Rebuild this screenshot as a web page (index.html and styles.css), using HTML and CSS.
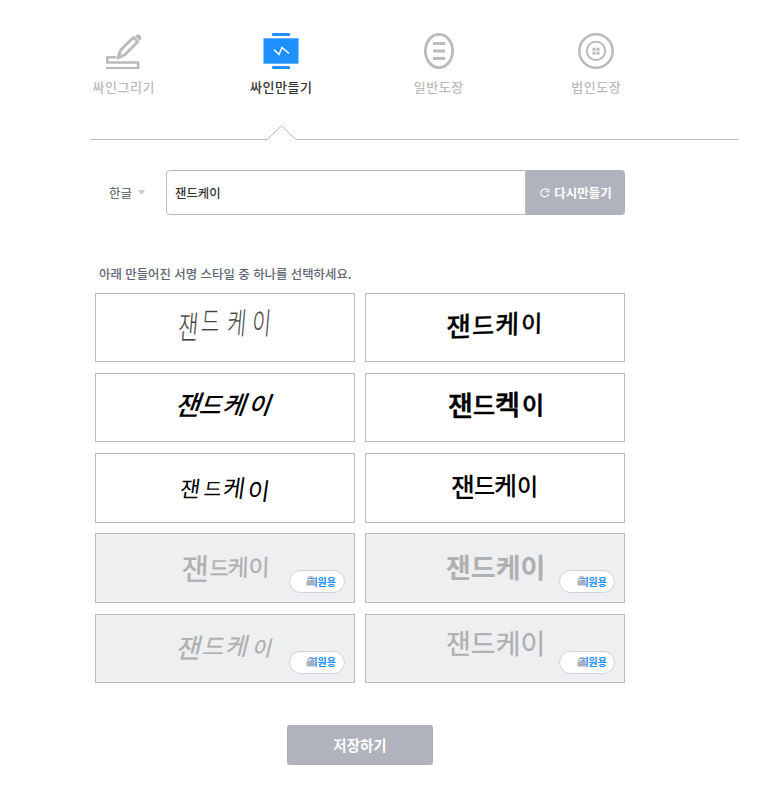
FILE: index.html
```html
<!DOCTYPE html>
<html lang="ko">
<head>
<meta charset="utf-8">
<title>싸인만들기</title>
<link rel="stylesheet" href="styles.css">
</head>
<body>
<nav class="tabs">
  <a class="tab">
    <svg width="36" height="36" viewBox="0 0 36 36" fill="none" stroke="#bbb">
      <path d="M10.200 24.300H1.200v5.200h31V35.200H0" stroke-width="2.600" stroke-linejoin="round"/>
      <path d="M12 25l2.700-8L27.400 4.500l4.300 4.300-12.800 13z" stroke-width="2.900" stroke-linejoin="round"/>
      <path d="M29 3.300L30.400 1.900q2-1.200 3.800.3t1 3.800l-1.400 1.700z" fill="#bbb" stroke="none"/>
    </svg>
    <span>싸인그리기</span>
  </a>
  <a class="tab active">
    <svg width="36" height="36" viewBox="0 0 36 36" fill="none">
      <path d="M10.300 1.500h15.400M10.300 34.500h15.400" stroke="#1e90ff" stroke-width="3" stroke-linecap="round"/>
      <rect x=".5" y="5.300" width="35" height="25.400" fill="#1e90ff"/>
      <path d="M11 16.500l5 5 3-7 7 6" stroke="#fff" stroke-width="1.500"/>
    </svg>
    <span>싸인만들기</span>
  </a>
  <a class="tab">
    <svg width="36" height="36" viewBox="0 0 36 36" fill="none" stroke="#bbb">
      <ellipse cx="18" cy="18" rx="13.600" ry="16.600" stroke-width="2.800"/>
      <path d="M12 10.500h12M12 18h12M12 25.500h12" stroke-width="3"/>
    </svg>
    <span>일반도장</span>
  </a>
  <a class="tab">
    <svg width="36" height="36" viewBox="0 0 36 36" fill="none" stroke="#bbb">
      <circle cx="18" cy="18" r="16.700" stroke-width="2.600"/>
      <circle cx="18" cy="18" r="9.200" stroke-width="2"/>
      <path d="M14.500 16.200h7M14.500 20.200h7" stroke-width="3" stroke-dasharray="3 1"/>
    </svg>
    <span>법인도장</span>
  </a>
</nav>
<svg class="divider" width="648" height="16" viewBox="0 0 648 16" fill="none" stroke="#bbb">
  <path d="M0 14.500H177.500L191.500 .700 205.500 14.500H648"/>
</svg>
<form class="maker">
  <div class="lang">한글<svg width="7" height="5" viewBox="0 0 7 5"><path d="M0 0h7L3.500 5z" fill="#c9ccd4"/></svg></div>
  <div class="name">잰드케이</div>
  <div class="remake">
    <svg width="10" height="10" viewBox="0 0 10 10" fill="none" stroke="#fff" stroke-width="1.100"><path d="M7.600 2A4 4 0 1 0 8.700 6M5.500 3.700h3.300V.500"/></svg>
    <span>다시만들기</span>
  </div>
</form>
<p class="guide">아래 만들어진 서명 스타일 중 하나를 선택하세요.</p>
<main class="cards">
  <div class="card"><svg class="sign pencil" viewBox="0 0 258 67"><text transform="translate(81 45) skewX(-5) scale(.82 1.200)"><tspan x="0" y="0" font-size="27">잰</tspan><tspan x="28" y="-6" font-size="24">드</tspan><tspan x="60" y="-4" font-size="25">케</tspan><tspan x="90" y="-4" font-size="25">이</tspan></text></svg></div>
  <div class="card"><svg class="sign marker" viewBox="0 0 258 67"><text transform="translate(80 43) rotate(-2) skewX(-3)"><tspan x="0" y="0" font-size="27">잰</tspan><tspan x="26" y="-1" font-size="24">드</tspan><tspan x="49" y="-1" font-size="26">케</tspan><tspan x="75" y="-2" font-size="23">이</tspan></text></svg></div>
  <div class="card"><svg class="sign brush" viewBox="0 0 258 67"><text transform="translate(78 41) skewX(-20)"><tspan x="0" y="0" font-size="27">잰</tspan><tspan x="24" y="-1" font-size="24">드</tspan><tspan x="47" y="-1" font-size="25">케</tspan><tspan x="73" y="-1" font-size="24">이</tspan></text></svg></div>
  <div class="card"><svg class="sign marker heavy" viewBox="0 0 258 67"><text transform="translate(82 42)"><tspan x="0" y="0" font-size="27">잰</tspan><tspan x="25" y="-2" font-size="24">드</tspan><tspan x="47" y="-1" font-size="27">켁</tspan><tspan x="74" y="-2" font-size="24">이</tspan></text></svg></div>
  <div class="card tall"><svg class="sign pen" viewBox="0 0 258 67"><text transform="translate(83 43) skewX(-8)"><tspan x="0" y="0" font-size="22">잰</tspan><tspan x="24" y="-1" font-size="19">드</tspan><tspan x="43" y="0" font-size="24">케</tspan><tspan x="68" y="3" font-size="24">이</tspan></text></svg></div>
  <div class="card tall"><svg class="sign pen bolder" viewBox="0 0 258 67"><text transform="translate(85 43)"><tspan x="0" y="0" font-size="26">잰</tspan><tspan x="23" y="-3" font-size="23">드</tspan><tspan x="43" y="-2" font-size="25">케</tspan><tspan x="66" y="-2" font-size="23">이</tspan></text></svg></div>
  <div class="card tall locked"><svg class="sign soft" viewBox="0 0 258 67"><text transform="translate(85 46) skewX(-2)"><tspan x="0" y="0" font-size="30">잰</tspan><tspan x="28" y="-4" font-size="21">드</tspan><tspan x="46" y="-4" font-size="23">케</tspan><tspan x="67" y="-4" font-size="23">이</tspan></text></svg>
    <span class="badge">회원용<svg class="lock" width="9" height="10" viewBox="0 0 9 10"><path d="M2 5V3.200a2.500 2.500 0 0 1 5 0V5" fill="none" stroke="#a9adb8" stroke-width="1.300"/><path d="M.500 4.500h8V9.500h-8z" fill="#a9adb8"/></svg></span></div>
  <div class="card tall locked right"><svg class="sign block" viewBox="0 0 258 67"><text transform="translate(80 44)"><tspan x="0" y="0" font-size="27">잰드케이</tspan></text></svg>
    <span class="badge">회원용<svg class="lock" width="9" height="10" viewBox="0 0 9 10"><path d="M2 5V3.200a2.500 2.500 0 0 1 5 0V5" fill="none" stroke="#a9adb8" stroke-width="1.300"/><path d="M.500 4.500h8V9.500h-8z" fill="#a9adb8"/></svg></span></div>
  <div class="card locked last"><svg class="sign soft" viewBox="0 0 258 67"><text transform="translate(79 43) skewX(-14)"><tspan x="0" y="0" font-size="27">잰</tspan><tspan x="26" y="-3" font-size="23">드</tspan><tspan x="49" y="-3" font-size="24">케</tspan><tspan x="76" y="-2" font-size="21">이</tspan></text></svg>
    <span class="badge">회원용<svg class="lock" width="9" height="10" viewBox="0 0 9 10"><path d="M2 5V3.200a2.500 2.500 0 0 1 5 0V5" fill="none" stroke="#a9adb8" stroke-width="1.300"/><path d="M.500 4.500h8V9.500h-8z" fill="#a9adb8"/></svg></span></div>
  <div class="card locked right last"><svg class="sign soft" viewBox="0 0 258 67"><text transform="translate(80 38.500)"><tspan x="0" y="0" font-size="27">잰드케이</tspan></text></svg>
    <span class="badge">회원용<svg class="lock" width="9" height="10" viewBox="0 0 9 10"><path d="M2 5V3.200a2.500 2.500 0 0 1 5 0V5" fill="none" stroke="#a9adb8" stroke-width="1.300"/><path d="M.500 4.500h8V9.500h-8z" fill="#a9adb8"/></svg></span></div>
</main>
<button class="save" type="button">저장하기</button>
</body>
</html>
```
FILE: styles.css
```css
* { box-sizing: border-box; }
body {
  margin: 0;
  padding-top: 33px;
  background: #fff;
  font-family: "Noto Sans CJK KR", sans-serif;
  overflow: hidden;
}
svg { display: block; }

.tabs { display: flex; width: 630px; margin-left: 45px; height: 92px; }
.tab {
  flex: 1;
  display: flex;
  flex-direction: column;
  align-items: center;
  color: #bbb;
  font-size: 13px;
  letter-spacing: .5px;
  font-weight: 500;
  line-height: 20px;
}
.tab span { margin-top: 8px; }
.tab.active { color: #333; }
.divider { margin-left: 90px; }

.maker { display: flex; margin: 29px 0 0 95px; width: 530px; height: 45px; }
.lang {
  display: flex;
  align-items: center;
  width: 71px;
  padding-left: 14px;
  gap: 6px;
  color: #555;
  font-size: 12.5px;
}
.name {
  flex: 1;
  border: 1px solid #bbb;
  border-radius: 4px 0 0 4px;
  padding-left: 8px;
  color: #333;
  font-size: 12.4px;
  font-weight: 500;
  line-height: 44px;
}
.remake {
  display: flex;
  align-items: center;
  justify-content: center;
  gap: 4px;
  width: 99px;
  padding-left: 1px;
  border-radius: 0 4px 4px 0;
  background: #b0b3bd;
  color: #fff;
  font-size: 12.5px;
  font-weight: 700;
}

.guide {
  margin: 49px 0 0 99px;
  height: 29px;
  color: #5f6675;
  font-size: 12.4px;
  font-weight: 500;
  line-height: 20px;
  white-space: nowrap;
}

.cards {
  display: grid;
  grid-template-columns: 260px 260px;
  grid-template-rows: 80px 80px 80px 81px 69px;
  column-gap: 10px;
  margin-left: 95px;
}
.card { position: relative; height: 69px; border: 1px solid #bbb; background: #fff; }
.card.tall { height: 70px; }
.card.locked { background: #eeeff1; }
.sign { width: 258px; height: 67px; fill: #000; stroke-linejoin: round; }
.pencil { fill: #444; font-weight: 300; stroke: #444; stroke-width: .1px; }
.marker { font-weight: 500; stroke: #000; stroke-width: .2px; }
.heavy { stroke-width: .6px; }
.brush { font-weight: 500; }
.pen { font-weight: 400; }
.bolder { font-weight: 500; }
.soft { fill: #b0b0b0; stroke: #b0b0b0; stroke-width: .3px; font-weight: 400; }
.block { fill: #b0b0b0; font-weight: 700; }

.badge {
  position: absolute;
  right: 9px;
  bottom: 9px;
  width: 56px;
  height: 23px;
  border: 1px solid #d0d3dc;
  border-radius: 12px;
  background: #fff;
  color: #1e90ff;
  font-size: 10px;
  font-weight: 700;
  line-height: 22px;
  text-align: right;
  padding-right: 8px;
}
.last .badge { bottom: 8px; line-height: 20px; }
.right .badge { padding-right: 7px; }
.lock { position: absolute; left: 16px; top: 5px; opacity: .95; }
.right .lock { left: 17px; }

.save {
  display: block;
  width: 146px;
  height: 40px;
  margin: 42px 0 0 287px;
  padding: 0;
  border: 0;
  border-radius: 3px;
  background: #b0b3bd;
  color: #fff;
  font: 700 14.500px/40px "Noto Sans CJK KR", sans-serif;
}
```
